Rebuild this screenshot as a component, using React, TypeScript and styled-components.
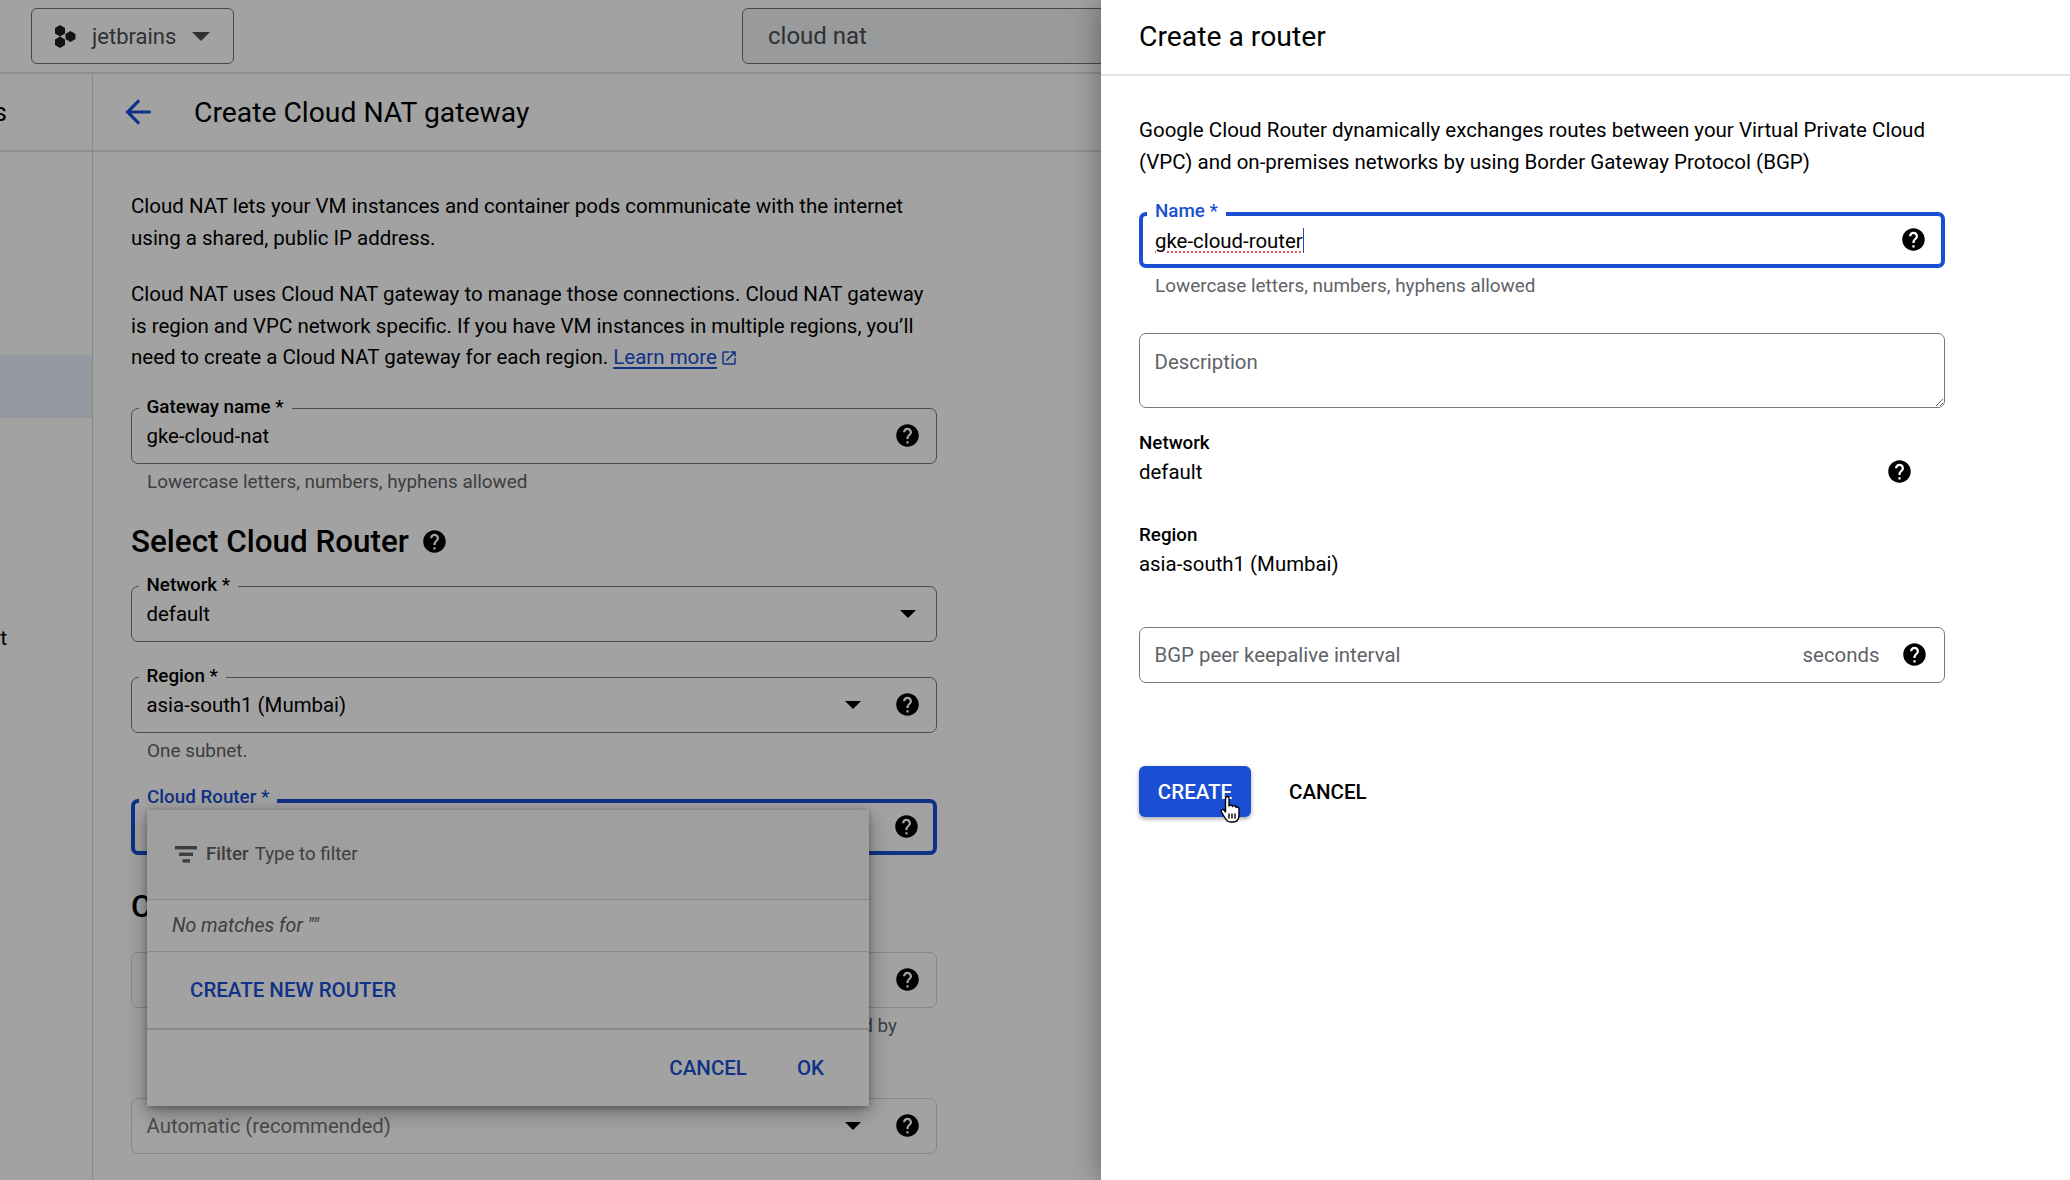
import React from "react";
import styled, { createGlobalStyle } from "styled-components";
import { MdHelp, MdArrowBack, MdOpenInNew } from "react-icons/md";

const Global = createGlobalStyle`
  html, body { margin: 0; padding: 0; background: #fff; }
  body { font-family: Roboto, "Liberation Sans", sans-serif; color: #000; }
  * { box-sizing: border-box; }
`;

const BLUE = "#1a4fd3";

const Screen = styled.div`
  display: grid;
  grid-template-columns: 1101px 969px;
  width: 2070px;
  height: 1180px;
  overflow: hidden;
`;

const Console = styled.div`
  position: relative;
  overflow: hidden;
  height: 1180px;
  display: flex;
  flex-direction: column;
  background: #fff;
  &::after {
    content: "";
    position: absolute;
    inset: 0;
    background: rgba(0, 0, 0, 0.365);
    z-index: 5;
  }
`;

const TopBar = styled.header`
  flex: none;
  height: 74px;
  display: flex;
  align-items: flex-start;
  padding: 8px 0 0 31px;
  border-bottom: 2px solid #e0e0e0;
`;

const ProjectButton = styled.div`
  flex: none;
  width: 203px;
  height: 56px;
  display: flex;
  align-items: center;
  padding-left: 22px;
  border: 1.5px solid #6f7378;
  border-radius: 6px;
  color: #4a4d51;
  font-size: 22px;
`;

const ProjectName = styled.span`
  margin-left: 16px;
  margin-right: 16px;
`;

const SearchBox = styled.div`
  flex: none;
  margin-left: 508px;
  width: 500px;
  height: 56px;
  display: flex;
  align-items: center;
  padding-left: 25px;
  background: #f1f3f4;
  border: 1.5px solid #6f7378;
  border-radius: 6px;
  color: #4a4d51;
  font-size: 24px;
`;

const Caret = styled.span<{ $w?: number; $mr?: number }>`
  flex: none;
  width: 0;
  height: 0;
  border-left: ${(p) => (p.$w ?? 16) / 2}px solid transparent;
  border-right: ${(p) => (p.$w ?? 16) / 2}px solid transparent;
  border-top: ${(p) => (p.$w ?? 16) / 2}px solid currentColor;
  margin-right: ${(p) => p.$mr ?? 0}px;
`;

const Body = styled.div`
  flex: 1;
  display: grid;
  grid-template-columns: 93px 1fr;
  min-height: 0;
`;

const Sidebar = styled.nav`
  border-right: 1px solid #d8d8d8;
  overflow: hidden;
`;

const SideTitle = styled.div`
  height: 78px;
  display: flex;
  justify-content: flex-end;
  align-items: center;
  padding-right: 85px;
  border-bottom: 2px solid #e0e0e0;
  font-size: 26px;
  white-space: nowrap;
`;

const SideItem = styled.div<{ $active?: boolean; $top: number }>`
  height: 63px;
  margin-top: ${(p) => p.$top}px;
  display: flex;
  justify-content: flex-end;
  align-items: center;
  padding-right: 85px;
  background: ${(p) => (p.$active ? "#e8f0fe" : "transparent")};
  font-size: 21px;
  white-space: nowrap;
`;

const Main = styled.main`
  display: flex;
  flex-direction: column;
  min-width: 0;
`;

const MainHeader = styled.div`
  height: 78px;
  display: flex;
  align-items: center;
  padding-left: 26px;
  border-bottom: 2px solid #e0e0e0;
  color: ${BLUE};
`;

const PageTitle = styled.h1`
  margin: 0 0 0 37px;
  color: #000;
  font-size: 28.3px;
  font-weight: 400;
`;

const Form = styled.div`
  width: 844px;
  padding: 39px 0 0 38px;
`;

const Para = styled.p<{ $mt?: number }>`
  margin: ${(p) => p.$mt ?? 0}px 0 0;
  font-size: 20.5px;
  line-height: 31.5px;
  color: #000;
`;

const LearnLink = styled.a`
  color: ${BLUE};
  text-decoration: underline;
  text-underline-offset: 3px;
`;

const ExtIcon = styled(MdOpenInNew)`
  margin-left: 3px;
  vertical-align: -3px;
  color: ${BLUE};
`;

const FieldAnchor = styled.div<{ $mt: number }>`
  position: relative;
  margin-top: ${(p) => p.$mt}px;
`;

const Field = styled.div<{ $focus?: boolean; $off?: boolean; $h?: number }>`
  position: relative;
  height: ${(p) => p.$h ?? 56}px;
  display: flex;
  align-items: center;
  border: ${(p) => (p.$focus ? 4 : 1.5)}px solid
    ${(p) => (p.$focus ? BLUE : p.$off ? "#d5d7da" : "#75797e")};
  border-radius: 7px;
  padding: 0 ${(p) => 17 - (p.$focus ? 4 : 1.5)}px 0 ${(p) => 16 - (p.$focus ? 4 : 1.5)}px;
  color: ${(p) => (p.$off ? "#70757a" : "#000")};
  font-size: 20.4px;
`;

const FieldLabel = styled.label<{ $focus?: boolean }>`
  position: absolute;
  top: ${(p) => (p.$focus ? -16.5 : -12.5)}px;
  left: ${(p) => (p.$focus ? 4 : 6.5)}px;
  padding: 0 8px;
  background: #fff;
  color: ${(p) => (p.$focus ? BLUE : "#000")};
  font-size: 18.8px;
  font-weight: 500;
  line-height: 22px;
`;

const FieldValue = styled.span`
  flex: 1;
  min-width: 0;
  white-space: nowrap;
`;

const Placeholder = styled(FieldValue)`
  color: #5f6368;
`;

const Suffix = styled.span`
  margin-right: 21px;
  color: #5f6368;
  font-size: 20.4px;
`;

const Help = styled(MdHelp)`
  flex: none;
  color: #000;
`;

const PanelHelp = styled(Help)`
  margin: 0 1px 2px 0;
`;

const RegionCaret = styled(Caret)`
  color: #000;
`;

const Hint = styled.div<{ $mt?: number; $right?: boolean }>`
  margin-top: ${(p) => p.$mt ?? 6}px;
  padding: ${(p) => (p.$right ? "0 40px 0 16px" : "0 0 0 16px")};
  text-align: ${(p) => (p.$right ? "right" : "left")};
  color: #5f6368;
  font-size: 18.9px;
  line-height: 24px;
`;

const Heading = styled.h2<{ $mt: number }>`
  display: flex;
  align-items: center;
  gap: 12px;
  margin: ${(p) => p.$mt}px 0 0;
  height: 40px;
  font-size: 31.4px;
  font-weight: 500;
  color: #000;
`;

const Dropdown = styled.div`
  position: absolute;
  z-index: 2;
  top: 11px;
  left: 16px;
  width: 722px;
  height: 296px;
  display: flex;
  flex-direction: column;
  background: #fff;
  box-shadow: 0 6px 20px rgba(0, 0, 0, 0.35), 0 2px 6px rgba(0, 0, 0, 0.25);
`;

const FilterRow = styled.div`
  flex: none;
  height: 90px;
  display: flex;
  align-items: center;
  padding: 0 0 0 28px;
  background: #fafafa;
  border-bottom: 1.5px solid #d9d9d9;
  color: #5f6368;
  font-size: 18.7px;
`;

const FilterKey = styled.span`
  margin: 0 6px 0 9px;
  font-weight: 500;
`;

const EmptyRow = styled.div`
  flex: none;
  height: 52px;
  display: flex;
  align-items: center;
  padding-left: 25px;
  border-bottom: 1.5px solid #d9d9d9;
  color: #5f6368;
  font-size: 19.5px;
  font-style: italic;
`;

const CreateRow = styled.div`
  flex: none;
  height: 78px;
  display: flex;
  align-items: center;
  padding-left: 43px;
  border-bottom: 2px solid #d9d9d9;
`;

const TextAction = styled.span<{ $black?: boolean }>`
  color: ${(p) => (p.$black ? "#000" : BLUE)};
  font-size: 20.5px;
  font-weight: 500;
  white-space: nowrap;
`;

const DropFooter = styled.div`
  flex: 1;
  display: flex;
  justify-content: flex-end;
  align-items: center;
  gap: 50px;
  padding-right: 45px;
`;

const Panel = styled.aside`
  position: relative;
  z-index: 10;
  height: 1180px;
  background: #fff;
  box-shadow: 0 0 28px rgba(0, 0, 0, 0.38);
`;

const PanelHeader = styled.div`
  height: 76px;
  display: flex;
  align-items: center;
  padding: 0 0 2px 38px;
  border-bottom: 2px solid #e3e3e3;
`;

const PanelTitle = styled.h2`
  margin: 0;
  font-size: 28.3px;
  font-weight: 400;
`;

const PanelBody = styled.div`
  width: 844px;
  padding: 39px 0 0 38px;
`;

const NameText = styled.span`
  text-decoration: underline dotted #e8574a 2px;
  text-underline-offset: 4px;
`;

const TextCaret = styled.span`
  display: inline-block;
  width: 1.5px;
  height: 25px;
  vertical-align: -5px;
  background: #2b4a9b;
`;

const Description = styled.textarea`
  display: block;
  width: 100%;
  height: 75px;
  margin-top: 35px;
  padding: 16px 14.5px;
  border: 1.5px solid #75797e;
  border-radius: 7px;
  outline: none;
  font-family: inherit;
  font-size: 20.4px;
  resize: vertical;
  &::placeholder { color: #5f6368; opacity: 1; }
`;

const StaticBlock = styled.div<{ $mt: number }>`
  margin-top: ${(p) => p.$mt}px;
  width: 775px;
`;

const StaticLabel = styled.div`
  font-size: 18.8px;
  font-weight: 500;
  line-height: 24px;
`;

const StaticValue = styled.div`
  display: flex;
  align-items: center;
  justify-content: space-between;
  margin-top: 2px;
  font-size: 20.4px;
  line-height: 30px;
`;

const Actions = styled.div`
  display: flex;
  align-items: center;
  gap: 38px;
  margin-top: 83px;
`;

const PrimaryButton = styled.button`
  position: relative;
  width: 112px;
  height: 51px;
  border: none;
  border-radius: 6px;
  background: ${BLUE};
  color: #fff;
  font-family: inherit;
  font-size: 20.5px;
  font-weight: 500;
  box-shadow: 0 2px 4px rgba(0, 0, 0, 0.35);
`;

const CursorSvg = styled.svg`
  position: absolute;
  left: 80px;
  top: 29px;
`;

const HandCursor = () => (
  <CursorSvg width="22" height="28" viewBox="0 0 20 28" fill="#fff" stroke="#000" strokeWidth="1.4" strokeLinejoin="round">
    <path d="M5.5 3C5.5 1 9 1 9 3V11C9.5 9.5 12.5 9.5 12.5 11.5C13 10 16 10.5 16 12.5C16.5 11.5 19 12 19 14V20C19 24 17 27 13 27H10.5C8 27 6.5 25.5 5 23L1.5 17C.5 15 3 13.5 4.5 15.5L5.5 17Z" />
    <path d="M9 18.5V23.5M12 18.5V23.5M15 18.5V23.5" fill="none" />
  </CursorSvg>
);

const HexIcon = () => (
  <svg width="22" height="23" viewBox="0 0 22 23" fill="#1f1f1f">
    <polygon points="6,0 11,3 11,8.5 6,11.5 1,8.5 1,3" />
    <polygon points="6,11.5 11,14.5 11,20 6,23 1,20 1,14.5" />
    <polygon points="16.5,6 21.5,9 21.5,14 16.5,17 11.5,14 11.5,9" />
  </svg>
);

const FilterIcon = () => (
  <svg width="22" height="17" viewBox="0 0 22 17" fill="currentColor">
    <rect x="0" y="0" width="22" height="3.4" />
    <rect x="4" y="6.6" width="14" height="3.4" />
    <rect x="7.5" y="13.2" width="7.5" height="3.4" />
  </svg>
);

export default function App() {
  return (
    <Screen>
      <Global />
      <Console>
        <TopBar>
          <ProjectButton>
            <HexIcon />
            <ProjectName>jetbrains</ProjectName>
            <Caret $w={18} />
          </ProjectButton>
          <SearchBox>cloud nat</SearchBox>
        </TopBar>
        <Body>
          <Sidebar>
            <SideTitle>Network Services</SideTitle>
            <SideItem $active $top={203} />
            <SideItem $top={188}>Private Service Connect</SideItem>
          </Sidebar>
          <Main>
            <MainHeader>
              <MdArrowBack size={38} />
              <PageTitle>Create Cloud NAT gateway</PageTitle>
            </MainHeader>
            <Form>
              <Para>
                Cloud NAT lets your VM instances and container pods communicate with the internet
                using a shared, public IP address.
              </Para>
              <Para $mt={25}>
                Cloud NAT uses Cloud NAT gateway to manage those connections. Cloud NAT gateway is
                region and VPC network specific. If you have VM instances in multiple regions,
                you’ll need to create a Cloud NAT gateway for each region.{" "}
                <LearnLink>Learn more</LearnLink>
                <ExtIcon size={18} />
              </Para>
              <FieldAnchor $mt={34}>
                <Field>
                  <FieldLabel>Gateway name *</FieldLabel>
                  <FieldValue>gke-cloud-nat</FieldValue>
                  <Help size={27} />
                </Field>
              </FieldAnchor>
              <Hint>Lowercase letters, numbers, hyphens allowed</Hint>
              <Heading $mt={28}>
                Select Cloud Router
                <Help size={27} />
              </Heading>
              <FieldAnchor $mt={24}>
                <Field>
                  <FieldLabel>Network *</FieldLabel>
                  <FieldValue>default</FieldValue>
                  <RegionCaret $mr={5} />
                </Field>
              </FieldAnchor>
              <FieldAnchor $mt={35}>
                <Field>
                  <FieldLabel>Region *</FieldLabel>
                  <FieldValue>asia-south1 (Mumbai)</FieldValue>
                  <RegionCaret $mr={33} />
                  <Help size={27} />
                </Field>
              </FieldAnchor>
              <Hint>One subnet.</Hint>
              <FieldAnchor $mt={36}>
                <Field $focus>
                  <FieldLabel $focus>Cloud Router *</FieldLabel>
                  <FieldValue />
                  <Help size={27} />
                </Field>
                <Dropdown>
                  <FilterRow>
                    <FilterIcon />
                    <FilterKey>Filter</FilterKey>
                    Type to filter
                  </FilterRow>
                  <EmptyRow>No matches for ""</EmptyRow>
                  <CreateRow>
                    <TextAction>CREATE NEW ROUTER</TextAction>
                  </CreateRow>
                  <DropFooter>
                    <TextAction>CANCEL</TextAction>
                    <TextAction>OK</TextAction>
                  </DropFooter>
                </Dropdown>
              </FieldAnchor>
              <Heading $mt={32}>Cloud NAT mapping</Heading>
              <FieldAnchor $mt={25}>
                <Field $off>
                  <FieldValue />
                  <Help size={27} />
                </Field>
              </FieldAnchor>
              <Hint $right>Primary and secondary ranges for all subnets are mapped by</Hint>
              <FieldAnchor $mt={60}>
                <Field $off>
                  <FieldValue>Automatic (recommended)</FieldValue>
                  <RegionCaret $mr={33} />
                  <Help size={27} />
                </Field>
              </FieldAnchor>
            </Form>
          </Main>
        </Body>
      </Console>
      <Panel>
        <PanelHeader>
          <PanelTitle>Create a router</PanelTitle>
        </PanelHeader>
        <PanelBody>
          <Para>
            Google Cloud Router dynamically exchanges routes between your Virtual Private Cloud
            (VPC) and on-premises networks by using Border Gateway Protocol (BGP)
          </Para>
          <FieldAnchor $mt={34}>
            <Field $focus>
              <FieldLabel $focus>Name *</FieldLabel>
              <FieldValue>
                <NameText>gke-cloud-router</NameText>
                <TextCaret />
              </FieldValue>
              <PanelHelp size={27} />
            </Field>
          </FieldAnchor>
          <Hint $mt={6}>Lowercase letters, numbers, hyphens allowed</Hint>
          <Description placeholder="Description" />
          <StaticBlock $mt={23}>
            <StaticLabel>Network</StaticLabel>
            <StaticValue>
              default
              <PanelHelp size={27} />
            </StaticValue>
          </StaticBlock>
          <StaticBlock $mt={36}>
            <StaticLabel>Region</StaticLabel>
            <StaticValue>asia-south1 (Mumbai)</StaticValue>
          </StaticBlock>
          <FieldAnchor $mt={48}>
            <Field>
              <Placeholder>BGP peer keepalive interval</Placeholder>
              <Suffix>seconds</Suffix>
              <PanelHelp size={27} />
            </Field>
          </FieldAnchor>
          <Actions>
            <PrimaryButton>
              CREATE
              <HandCursor />
            </PrimaryButton>
            <TextAction $black>CANCEL</TextAction>
          </Actions>
        </PanelBody>
      </Panel>
    </Screen>
  );
}
